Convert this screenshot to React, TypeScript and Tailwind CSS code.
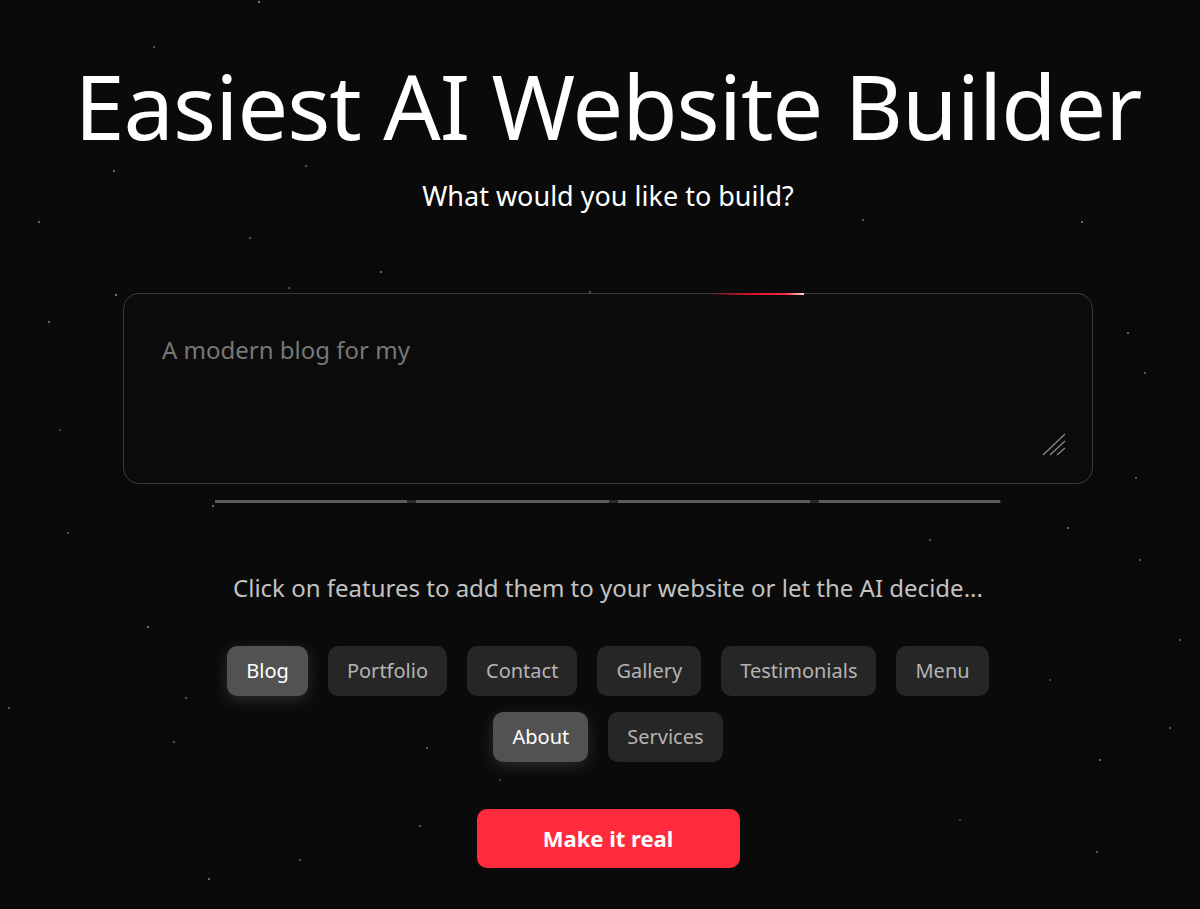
import React, { useState } from 'react';

const features = ['Blog', 'Portfolio', 'Contact', 'Gallery', 'Testimonials', 'Menu', 'About', 'Services'];

// star field positions, eyeballed from the reference
const stars: [number, number, number][] = [
  [259, 2, 0.6], [154, 47, 0.4], [114, 171, 0.5], [306, 166, 0.4], [39, 222, 0.5], [250, 238, 0.4],
  [381, 272, 0.5], [116, 295, 0.6], [289, 288, 0.4], [49, 322, 0.5], [1082, 222, 0.5], [1128, 333, 0.5],
  [1145, 373, 0.4], [1136, 478, 0.4], [930, 540, 0.4], [1068, 528, 0.5], [168, 453, 0.4], [213, 506, 0.5],
  [68, 533, 0.4], [9, 708, 0.4], [148, 627, 0.5], [174, 742, 0.4], [186, 698, 0.4], [1170, 728, 0.4],
  [1100, 760, 0.5], [1097, 852, 0.4], [905, 655, 0.4], [1140, 560, 0.4], [420, 826, 0.4], [427, 748, 0.4],
  [209, 879, 0.5], [704, 716, 0.6], [772, 300, 0.4], [590, 292, 0.4], [863, 220, 0.4], [1010, 120, 0.3],
  [1180, 640, 0.4], [60, 430, 0.3], [300, 860, 0.4], [960, 820, 0.3], [1050, 680, 0.3], [500, 780, 0.3],
];

export default function App() {
  const [selected, setSelected] = useState<string[]>(['Blog', 'About']);

  const toggle = (name: string) => {
    setSelected((prev) => (prev.includes(name) ? prev.filter((f) => f !== name) : [...prev, name]));
  };

  return (
    <div className="relative min-h-screen w-full overflow-hidden bg-[#0a0a0a] font-['Noto_Sans',sans-serif]">
      {/* stars */}
      <svg className="pointer-events-none absolute inset-0 h-full w-full" width="1200" height="909">
        {stars.map(([x, y, o], i) => (
          <circle key={i} cx={x} cy={y} r="1" fill="#ffffff" opacity={o} />
        ))}
      </svg>

      <div className="relative flex flex-col items-center pt-[50px] pl-[16px]">
        <h1 className="text-[90px] leading-[110px] font-normal tracking-[-1px] text-white">Easiest AI Website Builder</h1>
        <p className="mt-[19px] text-[27px] leading-[34px] text-white">What would you like to build?</p>

        {/* prompt box */}
        <div className="relative mt-[80px] h-[191px] w-[970px] rounded-[16px] border border-[#3a3a3a] bg-[#0b0b0b] p-6">
          {/* running glow on the border */}
          <div className="absolute -top-[1.5px] left-[588px] h-[2px] w-[92px] bg-[linear-gradient(90deg,rgba(120,10,25,0.2)_0%,#c8102a_35%,#ff2a40_80%,#ffd6da_100%)]" />
          <textarea
            className="h-full w-full resize-none bg-transparent px-[14px] pt-[14px] text-[24px] text-white outline-none placeholder:text-[#777777]"
            placeholder="A modern blog for my"
          />
          <svg className="absolute right-[26px] bottom-[27px]" width="24" height="23" viewBox="0 0 24 23">
            <g stroke="#8a8a8a" strokeWidth="1.2">
              <line x1="1" y1="22" x2="23" y2="1" />
              <line x1="8" y1="22" x2="23" y2="8" />
              <line x1="15" y1="22" x2="23" y2="15" />
            </g>
          </svg>
        </div>

        {/* progress */}
        <div className="mt-[16px] flex h-[3px] w-[786px] gap-[9px] bg-[#2a2a2a]">
          <div className="h-full w-[192px] bg-[#5c5c5c]" />
          <div className="h-full w-[193px] bg-[#5c5c5c]" />
          <div className="h-full w-[192px] bg-[#5c5c5c]" />
          <div className="h-full w-[181px] bg-[#5c5c5c]" />
        </div>

        <p className="mt-[70px] text-[24px] leading-[30px] text-[#c2c2c2]">
          Click on features to add them to your website or let the AI decide...
        </p>

        <div className="mt-[43px] flex w-[800px] flex-wrap justify-center gap-x-5 gap-y-4">
          {features.map((f) => {
            const on = selected.includes(f);
            return (
              <button
                key={f}
                onClick={() => toggle(f)}
                className={
                  on
                    ? 'h-[50px] rounded-[10px] bg-[#525252] px-[19px] text-[20px] text-white shadow-[0_4px_16px_rgba(255,255,255,0.14)]'
                    : 'h-[50px] rounded-[10px] bg-[#262626] px-[19px] text-[20px] text-[#b4b4b4]'
                }
              >
                {f}
              </button>
            );
          })}
        </div>

        <button className="mt-[47px] h-[59px] w-[263px] rounded-[10px] bg-[#fe2b3c] text-[22px] font-bold text-white">
          Make it real
        </button>
      </div>
    </div>
  );
}
